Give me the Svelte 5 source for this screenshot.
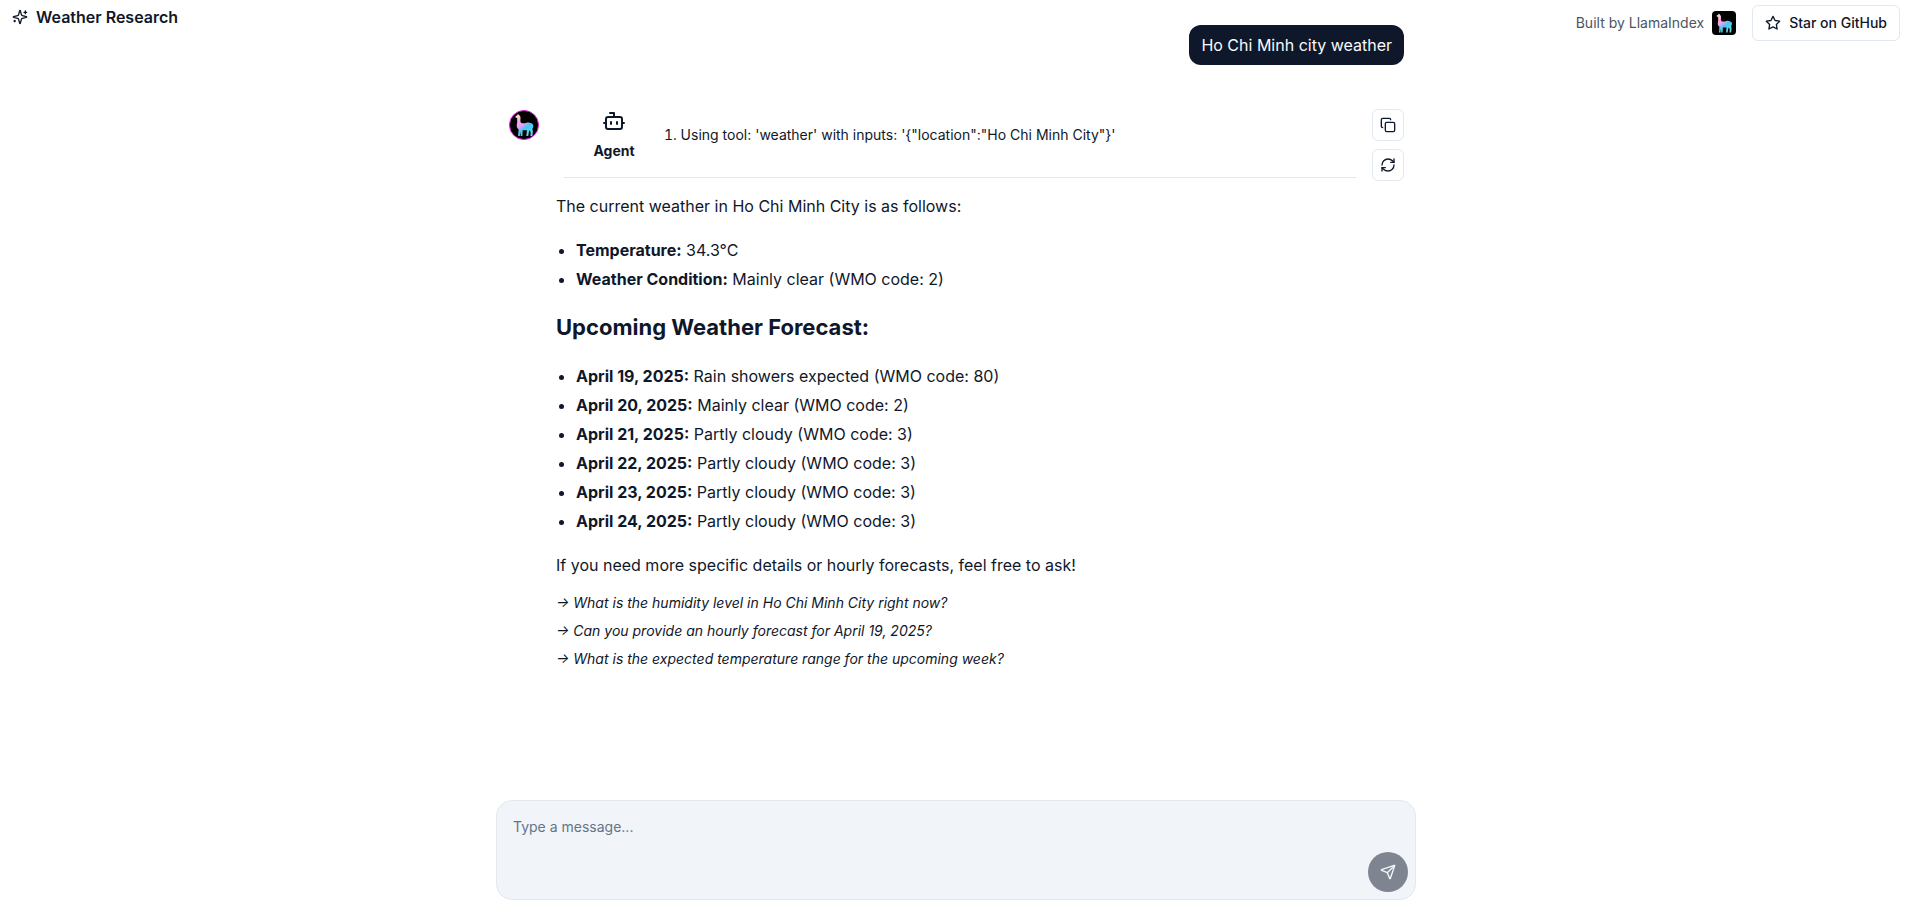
<script>
  const current = [
    ['Temperature:', '34.3°C'],
    ['Weather Condition:', 'Mainly clear (WMO code: 2)'],
  ];
  const forecast = [
    ['April 19, 2025:', 'Rain showers expected (WMO code: 80)'],
    ['April 20, 2025:', 'Mainly clear (WMO code: 2)'],
    ['April 21, 2025:', 'Partly cloudy (WMO code: 3)'],
    ['April 22, 2025:', 'Partly cloudy (WMO code: 3)'],
    ['April 23, 2025:', 'Partly cloudy (WMO code: 3)'],
    ['April 24, 2025:', 'Partly cloudy (WMO code: 3)'],
  ];
  const questions = [
    'What is the humidity level in Ho Chi Minh City right now?',
    'Can you provide an hourly forecast for April 19, 2025?',
    'What is the expected temperature range for the upcoming week?',
  ];
  let message = $state('');
</script>

{#snippet llama(id)}
  <svg class="llama" viewBox="0 0 24 24" aria-hidden="true">
    <defs>
      <linearGradient id={id} x1="5" y1="3" x2="18" y2="20" gradientUnits="userSpaceOnUse">
        <stop offset="0.08" stop-color="#f8e0c4" />
        <stop offset="0.3" stop-color="#fba6e2" />
        <stop offset="0.48" stop-color="#e5a4ee" />
        <stop offset="0.66" stop-color="#45c8f2" />
        <stop offset="1" stop-color="#62d6ee" />
      </linearGradient>
    </defs>
    <path
      fill="url(#{id})"
      d="M6.500 2.600l.6.900.6-.8.4 1.200c.8.6 1 1.400.9 2.400L8.900 8.600c0 1 .5 1.800 1.600 1.900l2.500-.1c1.200-.5 2.300-.7 3.600-.4 1.800.1 3 .9 3.300 2.300.2 1.100-.2 2.100-.7 3l.4 2.200-.4 3.900h-1.700l.2-3.500-1.200-1.500-.9 5h-1.600l.5-4.800-3.600-.2-.3 5.100H9.200l-.2-3.800-.6 3.800H6.900l.5-5.700C6.200 14.900 5.600 13.600 5.800 12l.4-2.500-.1-3.500-1.300-.4c-.4-.4-.2-1 .4-1.300l1-.6z"
    />
  </svg>
{/snippet}

<div class="page">
  <div class="brand">
    <svg class="icon" viewBox="0 0 24 24" aria-hidden="true">
      <path d="M9.937 15.500A2 2 0 0 0 8.500 14.063l-6.135-1.582a.5.5 0 0 1 0-.962L8.500 9.936A2 2 0 0 0 9.937 8.500l1.582-6.135a.5.5 0 0 1 .963 0L14.063 8.500A2 2 0 0 0 15.500 9.937l6.135 1.581a.5.5 0 0 1 0 .964L15.500 14.063a2 2 0 0 0-1.437 1.437l-1.582 6.135a.5.5 0 0 1-.963 0z" />
      <path d="M20 3v4M22 5h-4M4 17v2M5 18H3" />
    </svg>
    <h1>Weather Research</h1>
  </div>

  <main>
    <div class="messages">
      <div class="user">Ho Chi Minh city weather</div>

      <article class="reply">
        <div class="avatar">{@render llama('avatar-fill')}</div>
        <div class="body">
          <section class="event">
            <div class="agent">
              <svg class="icon bot" viewBox="0 0 24 24" aria-hidden="true">
                <path d="M12 8V4H8" />
                <rect width="16" height="12" x="4" y="8" rx="2" />
                <path d="M2 14h2M20 14h2M15 13v2M9 13v2" />
              </svg>
              <strong>Agent</strong>
            </div>
            <ol>
              <li>Using tool: 'weather' with inputs: '{'{'}"location":"Ho Chi Minh City"{'}'}'</li>
            </ol>
          </section>

          <div class="prose">
            <p>The current weather in Ho Chi Minh City is as follows:</p>
            <ul>
              {#each current as [label, value]}
                <li><strong>{label}</strong> {value}</li>
              {/each}
            </ul>
            <h2>Upcoming Weather Forecast:</h2>
            <ul>
              {#each forecast as [label, value]}
                <li><strong>{label}</strong> {value}</li>
              {/each}
            </ul>
            <p>If you need more specific details or hourly forecasts, feel free to ask!</p>
          </div>

          <div class="questions">
            {#each questions as question}
              <button type="button"><span>→</span> {question}</button>
            {/each}
          </div>
        </div>

        <div class="actions">
          <button type="button" aria-label="Copy">
            <svg class="icon" viewBox="0 0 24 24" aria-hidden="true">
              <rect width="14" height="14" x="8" y="8" rx="2" />
              <path d="M4 16c-1.100 0-2-.9-2-2V4c0-1.100.9-2 2-2h10c1.100 0 2 .9 2 2" />
            </svg>
          </button>
          <button type="button" aria-label="Regenerate">
            <svg class="icon" viewBox="0 0 24 24" aria-hidden="true">
              <path d="M3 12a9 9 0 0 1 9-9 9.750 9.750 0 0 1 6.740 2.740L21 8" />
              <path d="M21 3v5h-5" />
              <path d="M21 12a9 9 0 0 1-9 9 9.750 9.750 0 0 1-6.740-2.740L3 16" />
              <path d="M8 16H3v5" />
            </svg>
          </button>
        </div>
      </article>
    </div>

    <form class="composer" onsubmit={(e) => e.preventDefault()}>
      <textarea aria-label="Message" placeholder="Type a message..." bind:value={message}></textarea>
      <button type="submit" aria-label="Send" disabled={!message}>
        <svg class="icon" viewBox="0 0 24 24" aria-hidden="true">
          <path d="M14.536 21.686a.5.5 0 0 0 .937-.024l6.500-19a.496.496 0 0 0-.635-.635l-19 6.500a.5.5 0 0 0-.024.937l7.930 3.180a2 2 0 0 1 1.112 1.110z" />
          <path d="m21.854 2.147-10.940 10.939" />
        </svg>
      </button>
    </form>
  </main>

  <div class="links">
    <a class="built" href="https://www.llamaindex.ai/">
      Built by LlamaIndex
      <span class="logo">{@render llama('logo-fill')}</span>
    </a>
    <a class="star" href="https://github.com/run-llama/LlamaIndexTS">
      <svg class="icon" viewBox="0 0 24 24" aria-hidden="true">
        <path d="M12 2l3.090 6.260L22 9.270l-5 4.870 1.180 6.880L12 17.770l-6.180 3.250L7 14.140 2 9.270l6.910-1.010z" />
      </svg>
      Star on GitHub
    </a>
  </div>
</div>

<style>
  :global(body) {
    margin: 0;
    background: #fff;
  }
  .page {
    box-sizing: border-box;
    display: grid;
    grid-template-columns: 1fr minmax(0, 920px) 1fr;
    height: 100vh;
    padding: 0 16px 12px 12px;
    color: #0f172a;
    font: 400 16px/24px Inter, sans-serif;
  }
  button,
  textarea {
    font: inherit;
    color: inherit;
  }
  .icon {
    display: block;
    flex: none;
    width: 16px;
    height: 16px;
    fill: none;
    stroke: currentColor;
    stroke-width: 2;
    stroke-linecap: round;
    stroke-linejoin: round;
  }
  .brand {
    display: flex;
    align-items: center;
    align-self: start;
    gap: 8px;
    padding-top: 5px;
  }
  h1 {
    margin: 0;
    font-size: 16px;
    font-weight: 600;
    line-height: 24px;
    white-space: nowrap;
  }
  .links {
    display: flex;
    align-items: center;
    justify-content: flex-end;
    align-self: start;
    gap: 16px;
    padding-top: 5px;
    font-size: 14px;
    line-height: 20px;
    white-space: nowrap;
  }
  .links a {
    display: flex;
    align-items: center;
    gap: 8px;
    color: inherit;
    text-decoration: none;
  }
  .links .built {
    color: #4b5563;
  }
  .logo,
  .avatar {
    display: flex;
    flex: none;
    background: #000;
  }
  .logo {
    width: 24px;
    height: 24px;
    border-radius: 4px;
  }
  .llama {
    width: 100%;
    height: 100%;
  }
  .links .star {
    box-sizing: border-box;
    gap: 8px;
    height: 36px;
    padding: 0 12px;
    border: 1px solid #e2e8f0;
    border-radius: 6px;
    font-weight: 500;
  }
  main {
    display: flex;
    flex-direction: column;
    min-height: 0;
  }
  .messages {
    display: flex;
    flex: 1;
    flex-direction: column;
    gap: 44px;
    min-height: 0;
    padding: 25px 12px 0;
    overflow-y: auto;
  }
  .user {
    align-self: flex-end;
    padding: 8px 12px;
    border-radius: 12px;
    background: #0f172a;
    color: #f8fafc;
  }
  .reply {
    display: flex;
    align-items: flex-start;
    gap: 16px;
  }
  .avatar {
    box-sizing: border-box;
    width: 30px;
    height: 30px;
    margin: 1px;
    border: 1px solid #e61ee6;
    border-radius: 50%;
  }
  .body {
    flex: 1;
    min-width: 0;
  }
  .event {
    display: flex;
    align-items: center;
    margin: 0 0 14px 8px;
    padding-bottom: 16px;
    border-bottom: 1px solid #e2e8f0;
    font-size: 14px;
    line-height: 20px;
  }
  .agent {
    display: flex;
    flex: none;
    flex-direction: column;
    align-items: center;
    gap: 8px;
    width: 100px;
  }
  .agent strong {
    font-weight: 700;
  }
  .bot {
    width: 24px;
    height: 24px;
  }
  ol {
    margin: 0;
    padding: 0;
    list-style-position: inside;
  }
  .prose {
    line-height: 29px;
  }
  .prose p {
    margin: 0;
  }
  .prose ul {
    margin: 15px 0;
    padding-left: 20px;
  }
  .prose strong {
    font-weight: 700;
  }
  .prose h2 {
    margin: 19px 0 20px;
    font-size: 22px;
    font-weight: 700;
    line-height: 29px;
  }
  .questions {
    display: flex;
    flex-direction: column;
    align-items: flex-start;
    gap: 8px;
    margin-top: 13px;
  }
  .questions button {
    padding: 0;
    border: 0;
    background: none;
    font-size: 14px;
    font-style: italic;
    line-height: 20px;
    text-align: left;
  }
  .actions {
    display: flex;
    flex-direction: column;
    gap: 8px;
  }
  .actions button {
    display: grid;
    place-items: center;
    width: 32px;
    height: 32px;
    padding: 0;
    border: 1px solid #e2e8f0;
    border-radius: 6px;
    background: #fff;
  }
  .composer {
    box-sizing: border-box;
    display: flex;
    align-items: flex-end;
    height: 100px;
    padding: 7px;
    border: 1px solid #e2e8f0;
    border-radius: 16px;
    background: #f1f5f9;
  }
  .composer textarea {
    box-sizing: border-box;
    flex: 1;
    align-self: stretch;
    min-width: 0;
    padding: 9px;
    border: 0;
    outline: 0;
    background: none;
    font-size: 14px;
    line-height: 20px;
    resize: none;
  }
  .composer textarea::placeholder {
    color: #64748b;
    opacity: 1;
  }
  .composer button {
    display: grid;
    place-items: center;
    width: 40px;
    height: 40px;
    padding: 0;
    border: 0;
    border-radius: 50%;
    background: #0f172a;
    color: #f8fafc;
  }
  .composer button:disabled {
    opacity: 0.5;
  }
</style>
